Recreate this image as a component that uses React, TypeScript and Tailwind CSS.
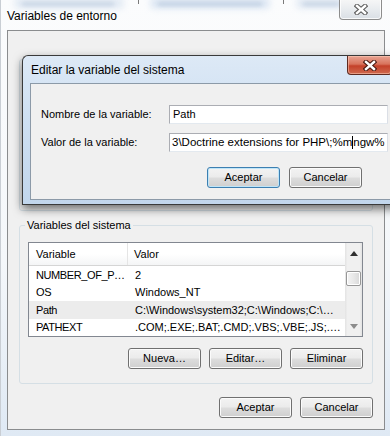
import React from "react";

const XGlyph = ({ outline }: { outline: string }) => (
  <svg width="14" height="11" viewBox="0 0 14 11">
    <path d="M3 2 L11 9 M11 2 L3 9" stroke={outline} strokeWidth="4.6" strokeLinecap="square" fill="none" />
    <path d="M3 2 L11 9 M11 2 L3 9" stroke="#ffffff" strokeWidth="2.4" strokeLinecap="square" fill="none" />
  </svg>
);

function Btn({ children, def = false }: { children: React.ReactNode; def?: boolean }) {
  return (
    <div
      className={`w-[73px] h-[21px] rounded-[3px] border flex items-center justify-center text-[11px] text-black bg-[linear-gradient(to_bottom,#f3f3f3_0%,#ebebeb_48%,#dddddd_52%,#cfcfcf_100%)] ${
        def
          ? "border-[#3c7fb1] shadow-[inset_0_0_0_1px_#bfe5f8]"
          : "border-[#707070] shadow-[inset_0_0_0_1px_#fbfbfb]"
      }`}
    >
      {children}
    </div>
  );
}

const rows = [
  { n: "NUMBER_OF_P…", v: "2", sel: false },
  { n: "OS", v: "Windows_NT", sel: false },
  { n: "Path", v: "C:\\Windows\\system32;C:\\Windows;C:\\…", sel: true },
  { n: "PATHEXT", v: ".COM;.EXE;.BAT;.CMD;.VBS;.VBE;.JS;.…", sel: false },
];

export default function App() {
  return (
    <div className="relative w-[390px] h-[436px] overflow-hidden font-['Liberation_Sans',Arial,sans-serif] text-[11px] text-black bg-[linear-gradient(to_bottom,#fbfcfd_0%,#f4f7fa_60%,#dfe9f4_100%)]">
      {/* blurred content behind the glass */}
      <div className="absolute left-[14px] top-[-3px] w-[110px] h-[12px] rounded-[4px] bg-[#dfe8f3] blur-[3px] opacity-80" />
      <div className="absolute left-[150px] top-[-3px] w-[120px] h-[12px] rounded-[4px] bg-[#d8e4f2] blur-[3px] opacity-80" />
      <div className="absolute left-[296px] top-[-3px] w-[50px] h-[12px] rounded-[4px] bg-[#dfe8f3] blur-[3px] opacity-80" />
      <div className="absolute left-[22px] top-[2px] w-[92px] h-[4px] bg-[#b9c9dd] blur-[2px] opacity-70" />
      <div className="absolute left-[158px] top-[2px] w-[104px] h-[4px] bg-[#b3c5db] blur-[2px] opacity-70" />
      <div className="absolute left-[303px] top-[2px] w-[36px] h-[4px] bg-[#b9c9dd] blur-[2px] opacity-70" />
      <div className="absolute left-[138px] top-0 w-px h-[4px] bg-[#7a7a7a]" />
      <div className="absolute left-[283px] top-0 w-px h-[4px] bg-[#7a7a7a]" />
      <div className="absolute left-0 top-0 w-px h-full bg-[#c9ced4]" />

      {/* title bar */}
      <div className="relative flex h-[30px]">
        <div className="pl-[7px] pt-[2px] flex items-center text-[12px] leading-none">Variables de entorno</div>
        <div className="ml-auto mr-[8px] -mt-[1px] w-[43px] h-[21px] rounded-b-[4px] border border-[#8d8d8d] border-t-0 bg-[linear-gradient(to_bottom,#f7f7f7_0%,#e9ecef_50%,#dadfe5_100%)] shadow-[inset_0_0_0_1px_rgba(255,255,255,0.8)] flex items-center justify-center">
          <XGlyph outline="#5f5f5f" />
        </div>
      </div>

      {/* outer window content */}
      <div className="relative ml-[7px] w-[378px] h-[400px] border border-[#8a8c8e] bg-[#f0f0f0] flex flex-col px-[11px]">
        <div className="mt-[28px] h-[152px] border border-[#d5dfe5] rounded-[3px]" />

        <fieldset className="mt-[6px] border border-[#d5dfe5] rounded-[3px] pl-[8px] pr-[9px] pb-[14px]">
          <legend className="-ml-[3px] px-[2px] leading-[16px]">Variables del sistema</legend>
          <div className="mt-[9px] h-[95px] border border-[#828790] bg-white flex">
            <div className="flex-1 flex flex-col">
              <div className="h-[23px] flex border-b border-[#d5d5d5] bg-[linear-gradient(to_bottom,#ffffff_0%,#ffffff_50%,#f4f5f6_100%)]">
                <div className="w-[99px] pl-[7px] flex items-center border-r border-[#e5e5e5]">Variable</div>
                <div className="flex-1 pl-[6px] flex items-center">Valor</div>
              </div>
              {rows.map((r) => (
                <div key={r.n} className={`h-[17.5px] flex items-center ${r.sel ? "bg-[#ececec]" : ""}`}>
                  <div className="w-[99px] pl-[7px] whitespace-nowrap tracking-[-0.4px]">{r.n}</div>
                  <div className="flex-1 pl-[7px] whitespace-nowrap overflow-hidden">{r.v}</div>
                </div>
              ))}
            </div>
            {/* scrollbar */}
            <div className="w-[17px] flex flex-col bg-[linear-gradient(to_right,#e3e3e3_0%,#f0f0f0_15%,#f0f0f0_85%,#e3e3e3_100%)]">
              <div className="h-[17px] mt-[2px] flex items-center justify-center">
                <svg width="8" height="5" viewBox="0 0 8 5"><path d="M0 5 L4 0 L8 5 Z" fill="#303030" /></svg>
              </div>
              <div className="mt-[9px] mx-[1px] h-[15px] rounded-[2px] border border-[#979797] bg-[linear-gradient(to_right,#f3f3f3_0%,#e8e8e8_50%,#d8d8d8_100%)] shadow-[inset_0_0_0_1px_#ffffff]" />
              <div className="mt-auto h-[17px] mb-[1px] flex items-center justify-center">
                <svg width="8" height="5" viewBox="0 0 8 5"><path d="M0 0 L4 5 L8 0 Z" fill="#8c8c8c" /></svg>
              </div>
            </div>
          </div>
          <div className="mt-[11px] flex justify-end gap-[8px]">
            <Btn>Nueva…</Btn>
            <Btn>Editar…</Btn>
            <Btn>Eliminar</Btn>
          </div>
        </fieldset>

        <div className="mt-[13px] flex justify-end gap-[8px]">
          <Btn>Aceptar</Btn>
          <Btn>Cancelar</Btn>
        </div>
      </div>

      {/* inner dialog overlay */}
      <div className="absolute left-[22px] top-[55px] w-[380px] h-[150px] rounded-tl-[6px] border border-[#3a3a3a] border-r-0 bg-[linear-gradient(to_bottom,#dde9f6_0%,#cfe0f2_40%,#c2d6ec_100%)] shadow-[0_4px_10px_rgba(0,0,0,0.55)]">
        <div className="absolute left-[324px] top-0 w-[45px] h-[19px] rounded-b-[4px] border border-[#5e2a20] border-t-0 bg-[linear-gradient(to_bottom,#e8a493_0%,#d8735c_45%,#c4412a_55%,#cf6a4f_100%)] shadow-[inset_0_0_0_1px_rgba(255,210,190,0.5)] flex items-center justify-center">
          <XGlyph outline="#4a1c14" />
        </div>
        <div className="h-[27px] pl-[8px] flex items-center text-[12px] leading-none">Editar la variable del sistema</div>
        <div className="ml-[7px] h-[117px] border border-[#8c9aa8] border-r-0 bg-[#f0f0f0] pl-[10px] pt-[21px]">
          <div className="flex items-center h-[19px]">
            <div className="w-[128px]">Nombre de la variable:</div>
            <div className="w-[219px] h-[19px] border border-[#abadb3] border-b-[#e3e9ef] border-r-[#dbdfe6] bg-white flex items-center pl-[3px] whitespace-nowrap overflow-hidden">Path</div>
          </div>
          <div className="flex items-center h-[19px] mt-[9px]">
            <div className="w-[128px]">Valor de la variable:</div>
            <div className="w-[219px] h-[19px] border border-[#abadb3] border-b-[#e3e9ef] border-r-[#dbdfe6] bg-white flex items-center pl-[2px] whitespace-nowrap overflow-hidden text-[11.5px]">
              <span>3\Doctrine extensions for PHP\;%m</span>
              <span className="inline-block w-px h-[13px] bg-black" />
              <span>ngw%</span>
            </div>
          </div>
          <div className="mt-[15px] ml-[166px] flex gap-[9px]">
            <Btn def>Aceptar</Btn>
            <Btn>Cancelar</Btn>
          </div>
        </div>
      </div>
    </div>
  );
}
